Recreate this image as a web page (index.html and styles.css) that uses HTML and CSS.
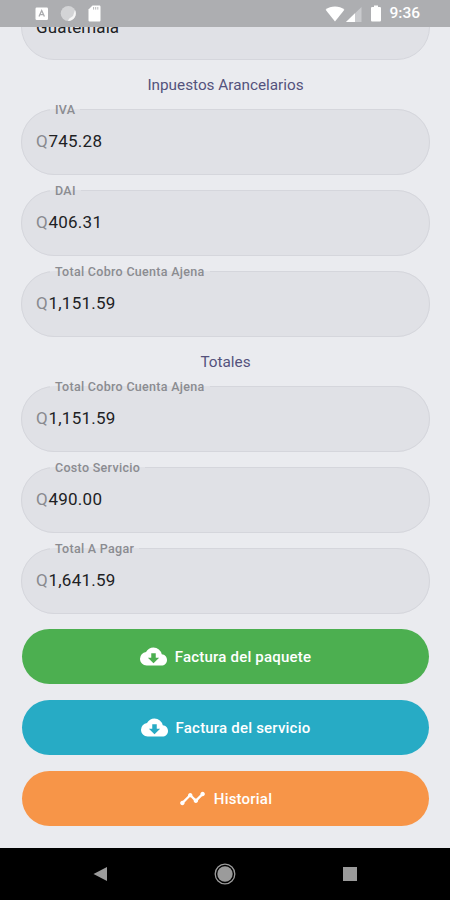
FILE: index.html
```
<!DOCTYPE html>
<html lang="es">
  <head>
    <meta charset="UTF-8" />
    <meta name="viewport" content="width=device-width, initial-scale=1.0" />
    <title>Detalle del paquete</title>
    <link rel="stylesheet" href="styles.css">
  </head>
  <body>
    <header class="status-bar">
      <div class="status-left">
        <svg width="14" height="14" viewBox="0 0 14 14">
          <rect x="0.5" y="0.5" width="12.5" height="12.5" rx="1.2" fill="#fff" />
          <path d="M4 9.5 6.7 3.5 9.4 9.5M5 7.7h3.4" fill="none" stroke="#aaabae" stroke-width="1.3" />
        </svg>
        <svg width="17" height="17" viewBox="0 0 17 17">
          <circle cx="8.3" cy="8.5" r="7.6" fill="#d3d4d6" />
          <path d="M15 5a7.6 7.6 0 0 1-7 11l1-2.3 4-2.7z" fill="#f6f6f6" />
        </svg>
        <svg width="13" height="17" viewBox="0 0 13 17">
          <path d="M4.5 0.5h6.7c.8 0 1.3.5 1.3 1.3v13.4c0 .8-.5 1.3-1.3 1.3H1.8c-.8 0-1.3-.5-1.3-1.3V4.5z" fill="#fff" />
          <path d="M5.6 2v2.6M7.7 2v2.6M9.8 2v2.6" stroke="#b8b9bb" stroke-width="1" />
        </svg>
      </div>
      <div class="status-right">
        <svg width="20" height="16" viewBox="0 0 20 16">
          <path d="M10 15.5.6 3.8C3.2 1.6 6.4.5 10 .5s6.8 1.1 9.4 3.3z" fill="#fff" />
        </svg>
        <svg class="signal" width="16" height="15" viewBox="0 0 16 15">
          <path d="M0 15 15.5 0v15z" fill="#c9cacd" />
          <path d="M0 15 9 6.3V15z" fill="#fff" />
        </svg>
        <svg class="battery" width="10" height="17" viewBox="0 0 10 17">
          <path d="M3 .5h4V2h1.7c.7 0 1.3.5 1.3 1.3v11.9c0 .8-.6 1.3-1.3 1.3H1.3C.6 16.5 0 16 0 15.2V3.3C0 2.5.6 2 1.3 2H3z" fill="#fff" />
        </svg>
        <span class="clock">9:36</span>
      </div>
    </header>

    <main class="content">
      <div class="field-cut">Guatemala</div>

      <h2>Inpuestos Arancelarios</h2>
      <fieldset class="field">
        <legend>IVA</legend>
        <span class="prefix">Q</span><span class="value">745.28</span>
      </fieldset>
      <fieldset class="field">
        <legend>DAI</legend>
        <span class="prefix">Q</span><span class="value">406.31</span>
      </fieldset>
      <fieldset class="field">
        <legend>Total Cobro Cuenta Ajena</legend>
        <span class="prefix">Q</span><span class="value">1,151.59</span>
      </fieldset>

      <h2 class="totals">Totales</h2>
      <fieldset class="field">
        <legend>Total Cobro Cuenta Ajena</legend>
        <span class="prefix">Q</span><span class="value">1,151.59</span>
      </fieldset>
      <fieldset class="field">
        <legend>Costo Servicio</legend>
        <span class="prefix">Q</span><span class="value">490.00</span>
      </fieldset>
      <fieldset class="field">
        <legend>Total A Pagar</legend>
        <span class="prefix">Q</span><span class="value">1,641.59</span>
      </fieldset>

      <div class="actions">
        <button class="btn btn-green">
          <svg width="27" height="27" viewBox="0 0 24 24" fill="currentColor">
            <path d="M19.35 10.04A7.49 7.49 0 0 0 12 4C9.11 4 6.6 5.64 5.35 8.04A5.994 5.994 0 0 0 0 14c0 3.31 2.69 6 6 6h13c2.76 0 5-2.24 5-5 0-2.64-2.05-4.78-4.65-4.96zM17 13l-5 5-5-5h3V9h4v4h3z" />
          </svg>
          <span>Factura del paquete</span>
        </button>
        <button class="btn btn-blue">
          <svg width="27" height="27" viewBox="0 0 24 24" fill="currentColor">
            <path d="M19.35 10.04A7.49 7.49 0 0 0 12 4C9.11 4 6.6 5.64 5.35 8.04A5.994 5.994 0 0 0 0 14c0 3.31 2.69 6 6 6h13c2.76 0 5-2.24 5-5 0-2.64-2.05-4.78-4.65-4.96zM17 13l-5 5-5-5h3V9h4v4h3z" />
          </svg>
          <span>Factura del servicio</span>
        </button>
        <button class="btn btn-orange">
          <svg width="27" height="27" viewBox="0 0 24 24" fill="currentColor">
            <path d="M23 8c0 1.1-.9 2-2 2-.18 0-.35-.02-.51-.07l-3.56 3.55c.05.16.07.34.07.52 0 1.1-.9 2-2 2s-2-.9-2-2c0-.18.02-.36.07-.52l-2.55-2.55c-.16.05-.34.07-.52.07s-.36-.02-.52-.07l-4.55 4.56c.05.16.07.33.07.51 0 1.1-.9 2-2 2s-2-.9-2-2 .9-2 2-2c.18 0 .35.02.51.07l4.56-4.55C8.02 9.36 8 9.18 8 9c0-1.1.9-2 2-2s2 .9 2 2c0 .18-.02.36-.07.52l2.55 2.55c.16-.05.34-.07.52-.07s.36.02.52.07l3.55-3.56C19.02 8.35 19 8.18 19 8c0-1.1.9-2 2-2s2 .9 2 2z" />
          </svg>
          <span>Historial</span>
        </button>
      </div>
    </main>

    <nav class="nav-bar">
      <svg width="24" height="24" viewBox="0 0 24 24">
        <path d="M5.5 12 19 5v14z" fill="#9b9b9b" />
      </svg>
      <svg width="24" height="24" viewBox="0 0 24 24">
        <circle cx="12" cy="12" r="9.8" fill="none" stroke="#9b9b9b" stroke-width="1.3" />
        <circle cx="12" cy="12" r="7.7" fill="#9b9b9b" />
      </svg>
      <svg width="24" height="24" viewBox="0 0 24 24">
        <rect x="5" y="5" width="14" height="14" fill="#9b9b9b" />
      </svg>
    </nav>
  </body>
</html>
```

FILE: styles.css
```
* {
  box-sizing: border-box;
}

body {
  margin: 0;
  height: 900px;
  display: flex;
  flex-direction: column;
  overflow: hidden;
  background: #eaebef;
  font-family: Roboto, sans-serif;
}

/* android status bar */
.status-bar {
  flex: none;
  height: 27px;
  padding: 0 30px 0 35px;
  display: flex;
  align-items: center;
  justify-content: space-between;
  background: #adaeb1;
}

.status-left,
.status-right {
  display: flex;
  align-items: center;
}

.status-left {
  gap: 11px;
}

.signal {
  margin-left: 1px;
  margin-top: 2px;
}

.battery {
  margin-left: 9px;
}

.clock {
  margin-left: 8px;
  color: #fff;
  font-size: 15.5px;
  font-weight: 500;
  line-height: 29px;
}

.content {
  flex: 1;
  min-height: 0;
  overflow: hidden;
  padding: 0 20px 0 21px;
}

/* field scrolled under the status bar */
.field-cut {
  height: 66px;
  margin-top: -33px;
  padding: 20px 14px 0;
  border: 1px solid #d5d6dc;
  border-radius: 33px;
  background: #e0e1e6;
  color: #202124;
  font-size: 17px;
  line-height: 24px;
  letter-spacing: 0.1px;
}

h2 {
  margin: 15px 0 6px;
  color: #54527c;
  font-size: 15.3px;
  font-weight: 400;
  line-height: 20px;
  text-align: center;
}

h2.totals {
  margin: 15px 0 6px;
}

.field {
  min-width: 0;
  height: 74px;
  margin: 0 0 7px;
  padding: 0 14px;
  border: 1px solid #d5d6dc;
  border-radius: 33px;
  background: #e0e1e6;
  font-size: 17px;
  line-height: 46px;
  letter-spacing: 0.25px;
}

.field legend {
  height: 17px;
  margin-left: 14px;
  padding: 0 5px;
  color: #8b8c91;
  font-size: 12.5px;
  font-weight: 500;
  line-height: 17px;
  letter-spacing: 0.3px;
}

.prefix {
  margin-right: 0.5px;
  color: #898a90;
}

.value {
  color: #202124;
}

.actions {
  display: flex;
  flex-direction: column;
  gap: 16px;
  padding: 8px 1px 0;
}

.btn {
  height: 55px;
  padding: 0;
  border: 0;
  border-radius: 28px;
  display: flex;
  align-items: center;
  justify-content: center;
  gap: 8px;
  color: #fff;
  font-family: inherit;
  font-size: 15px;
  font-weight: 500;
  letter-spacing: 0.2px;
}

.btn-green {
  background: #4caf50;
}

.btn-blue {
  background: #27abc5;
}

.btn-orange {
  background: #f79548;
}

/* android navigation */
.nav-bar {
  flex: none;
  height: 52px;
  padding: 0 88px;
  display: flex;
  align-items: center;
  justify-content: space-between;
  background: #000;
}
```
